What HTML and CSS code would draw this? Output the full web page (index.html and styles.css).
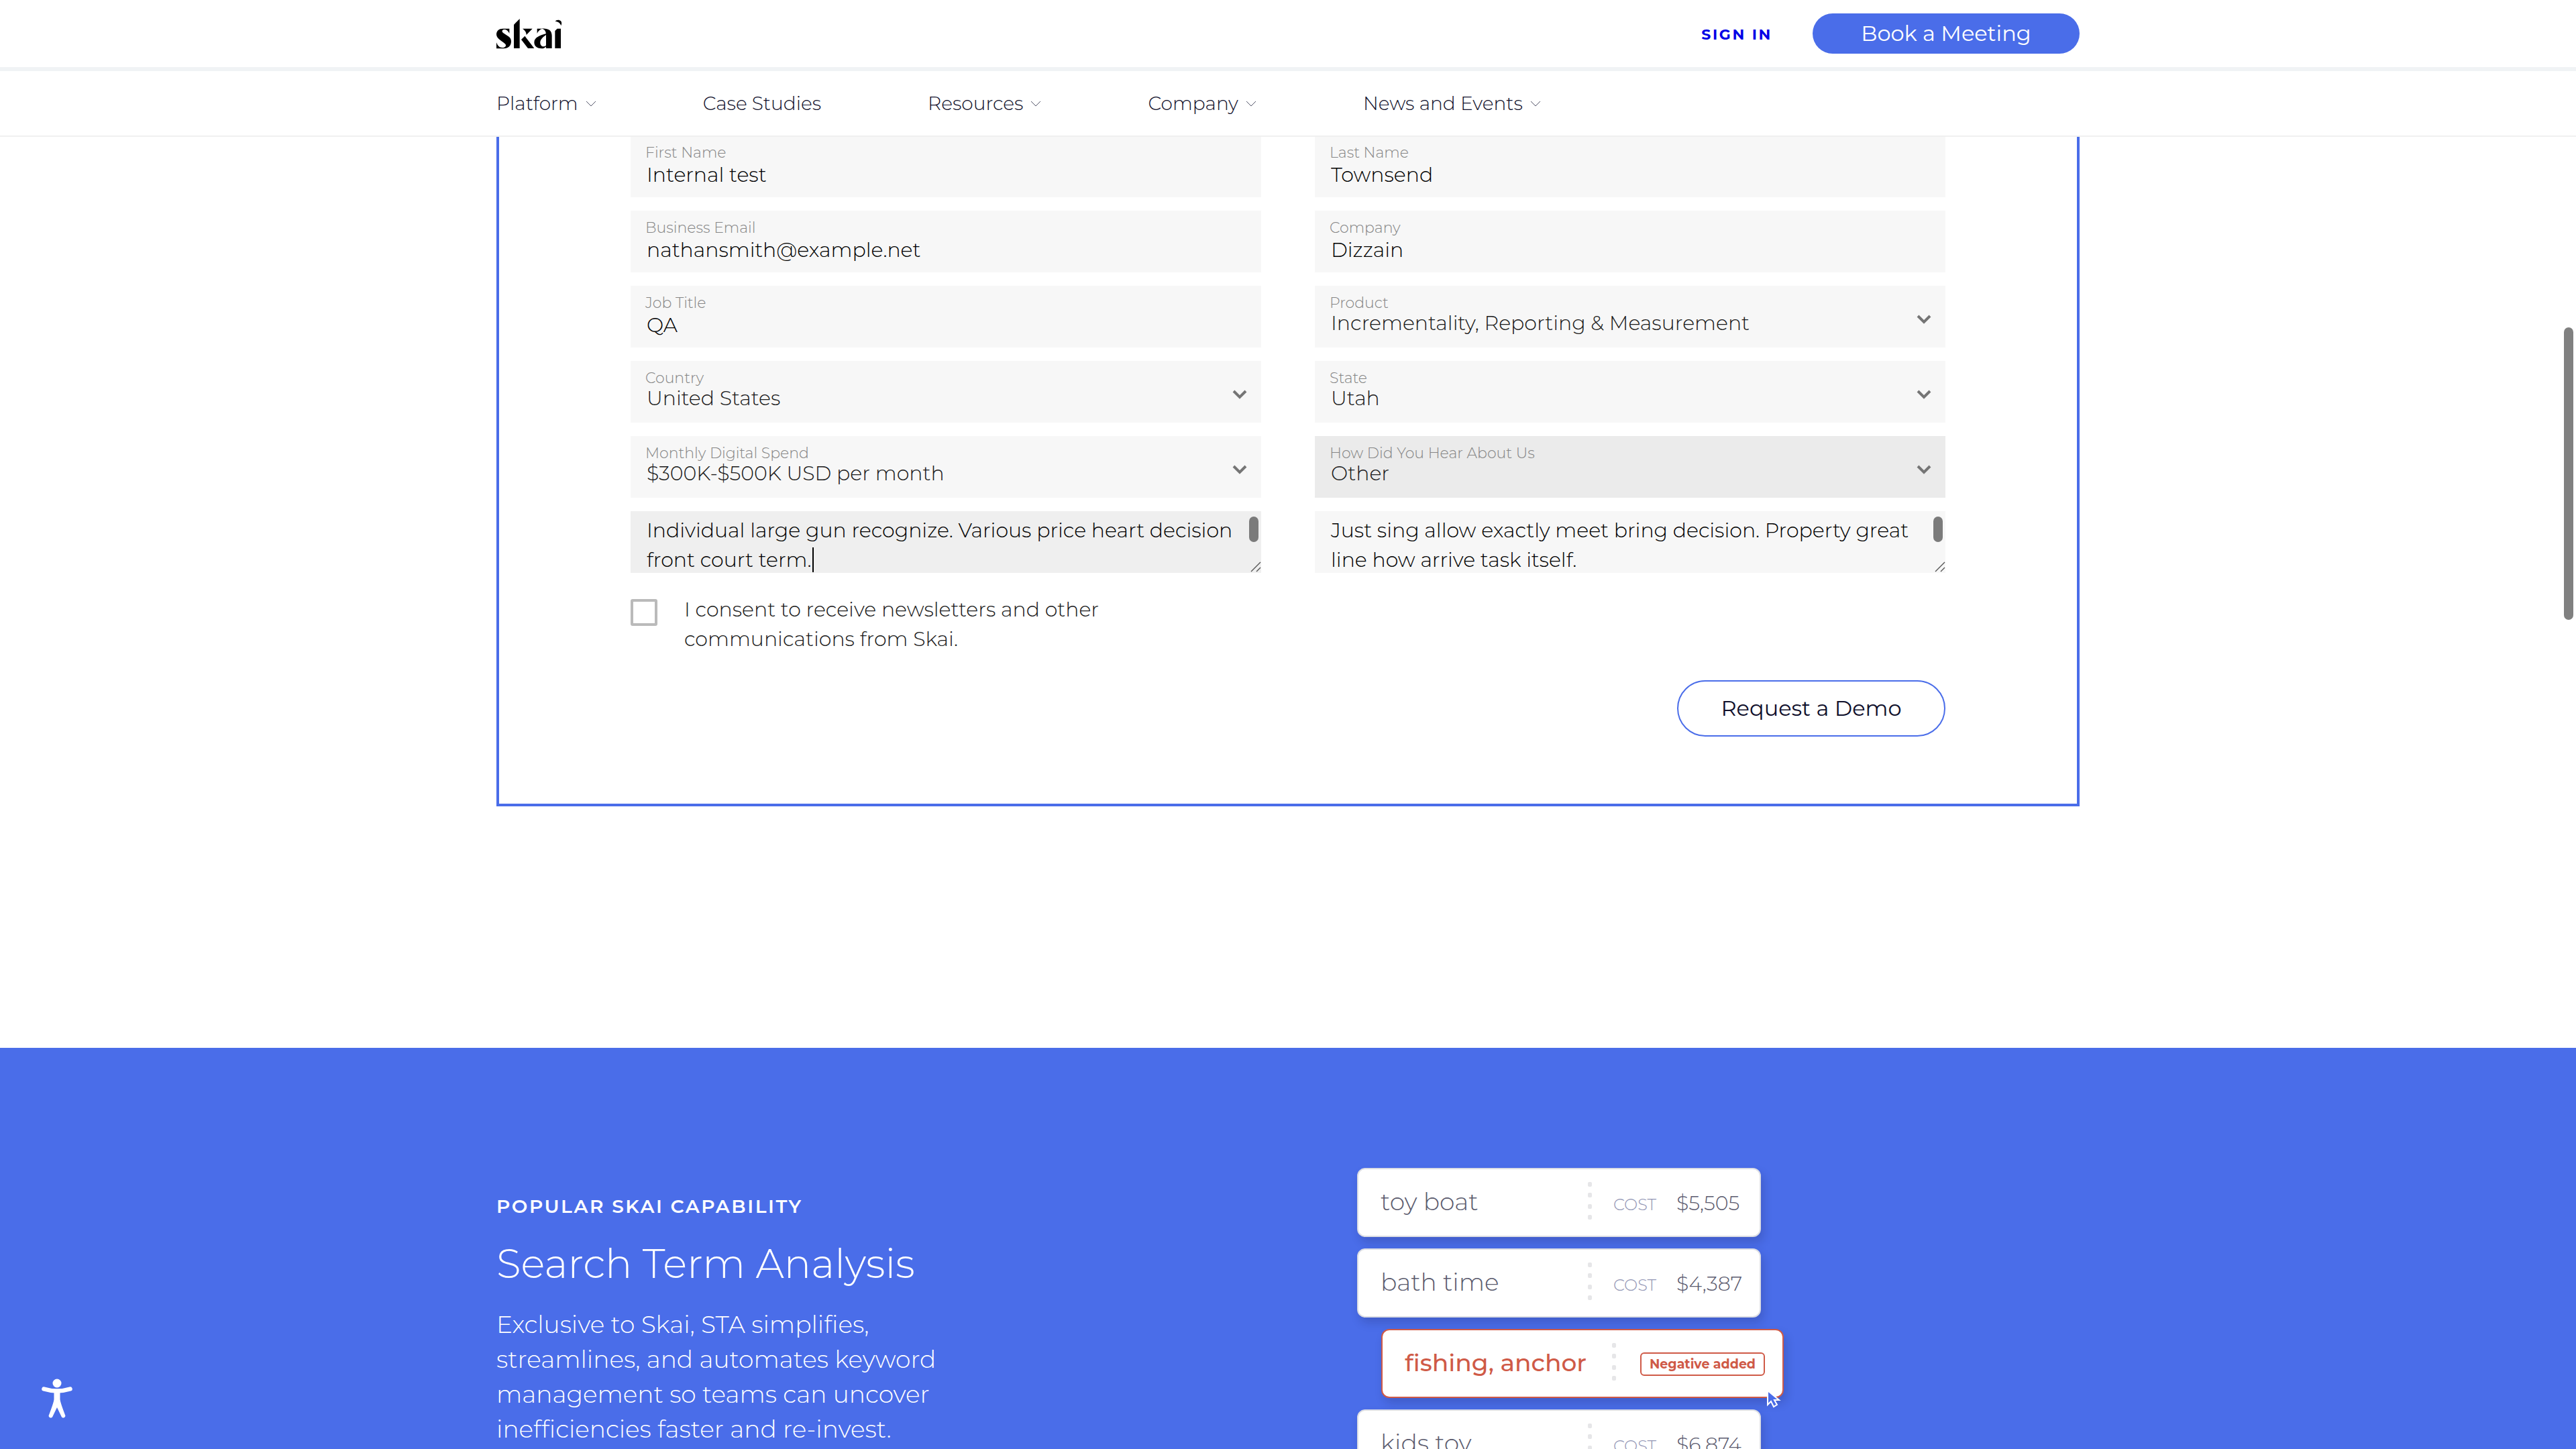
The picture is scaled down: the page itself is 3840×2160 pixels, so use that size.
FILE: index.html
```html
<!DOCTYPE html>
<html lang="en">
<head>
<meta charset="utf-8">
<meta name="viewport" content="width=device-width, initial-scale=1">
<title>Skai – Request a Demo</title>
<link rel="stylesheet" href="styles.css">
</head>
<body>
<svg class="sprite" aria-hidden="true">
  <symbol id="nav-chevron" viewBox="0 0 16 9"><path d="M1 1l7 7 7-7" fill="none" stroke="#55566a" stroke-width="1"/></symbol>
  <symbol id="select-chevron" viewBox="0 0 22 14"><path d="M2 2l9 9 9-9" fill="none" stroke="#757575" stroke-width="4"/></symbol>
  <symbol id="resizer" viewBox="0 0 16 16"><path d="M1 15L15 1M9 15l6-6" fill="none" stroke="#555" stroke-width="1.4"/></symbol>
  <symbol id="dots" viewBox="0 0 6 56"><g fill="#e6e6e8"><rect width="6" height="7" rx="2"/><rect y="16" width="6" height="7" rx="2"/><rect y="33" width="6" height="7" rx="2"/><rect y="49" width="6" height="7" rx="2"/></g></symbol>
</svg>

<header class="site-header">
  <div class="topbar">
    <div class="container topbar-row">
      <a class="logo" href="#" aria-label="Skai home">
        <svg viewBox="30 24 294 135" width="98" height="45" aria-hidden="true">
          <path d="M88 68V90C84 80 76 72 66 72C56 72 52 80 60 87L86 104C98 113 98 130 92 142C86 152 76 157 62 157H30V130C36 146 44 153 56 153C69 153 76 145 70 137C62 128 30 114 30 94C30 78 42 68 58 68Z"/>
          <path d="M108 50L134 24V156H108Z"/>
          <path d="M147 68H191L164 96C164 84 158 76 147 68Z"/>
          <path d="M141 117L157 101L199 156H171Z"/>
          <path d="M212 68H236C224 71 216 79 212 90Z"/>
          <path d="M232 68C262 66 278 76 278 100V156H252V96C252 80 246 70 232 68Z"/>
          <path d="M253 90C226 98 199 106 199 130C199 148 214 157 232 157C242 157 250 152 253 146V142C246 152 228 150 226 134C224 116 240 104 253 95Z"/>
          <path d="M292 78L302 68H318V156H292Z"/>
          <path d="M293 36C298 28 310 26 318 34C324 42 321 50 319 55C316 44 306 36 293 36Z"/>
        </svg>
      </a>
      <div class="topbar-actions">
        <a class="sign-in" href="#">SIGN IN</a>
        <button class="book" type="button">Book a Meeting</button>
      </div>
    </div>
  </div>
  <nav class="mainnav" aria-label="Main">
    <ul class="container mainnav-list">
      <li><a href="#">Platform<svg><use href="#nav-chevron"/></svg></a></li>
      <li><a href="#">Case Studies</a></li>
      <li><a href="#">Resources<svg><use href="#nav-chevron"/></svg></a></li>
      <li><a href="#">Company<svg><use href="#nav-chevron"/></svg></a></li>
      <li><a href="#">News and Events<svg><use href="#nav-chevron"/></svg></a></li>
    </ul>
  </nav>
</header>

<main>
  <form class="container demo-form">
    <div class="fields">
      <div class="field"><label for="first">First Name</label><input id="first" type="text" value="Internal test"></div>
      <div class="field"><label for="last">Last Name</label><input id="last" type="text" value="Townsend"></div>
      <div class="field"><label for="email">Business Email</label><input id="email" type="email" value="nathansmith@example.net"></div>
      <div class="field"><label for="company">Company</label><input id="company" type="text" value="Dizzain"></div>
      <div class="field"><label for="job">Job Title</label><input id="job" type="text" value="QA"></div>
      <div class="field"><label for="product">Product</label><select id="product"><option>Incrementality, Reporting &amp; Measurement</option></select><svg class="arrow"><use href="#select-chevron"/></svg></div>
      <div class="field"><label for="country">Country</label><select id="country"><option>United States</option></select><svg class="arrow"><use href="#select-chevron"/></svg></div>
      <div class="field"><label for="state">State</label><select id="state"><option>Utah</option></select><svg class="arrow"><use href="#select-chevron"/></svg></div>
      <div class="field"><label for="spend">Monthly Digital Spend</label><select id="spend"><option>$300K-$500K USD per month</option></select><svg class="arrow"><use href="#select-chevron"/></svg></div>
      <div class="field is-hovered"><label for="source">How Did You Hear About Us</label><select id="source"><option>Other</option></select><svg class="arrow"><use href="#select-chevron"/></svg></div>
      <div class="message is-focused">
        <textarea aria-label="Please specify">Individual large gun recognize. Various price heart decision front court term.</textarea>
        <span class="caret"></span><span class="thumb"></span><svg class="grip"><use href="#resizer"/></svg>
      </div>
      <div class="message">
        <textarea aria-label="Message">Just sing allow exactly meet bring decision. Property great line how arrive task itself.</textarea>
        <span class="thumb"></span><svg class="grip"><use href="#resizer"/></svg>
      </div>
    </div>
    <div class="consent">
      <input id="consent" type="checkbox">
      <label for="consent">I consent to receive newsletters and other communications from Skai.</label>
    </div>
    <div class="submit-row"><button class="submit" type="submit">Request a Demo</button></div>
  </form>

  <section class="capability">
    <div class="container capability-grid">
      <div class="capability-text">
        <p class="eyebrow">POPULAR SKAI CAPABILITY</p>
        <h2>Search Term Analysis</h2>
        <p class="lead">Exclusive to Skai, STA simplifies, streamlines, and automates keyword management so teams can uncover inefficiencies faster and re-invest.</p>
      </div>
      <ul class="terms">
        <li class="term"><span class="name">toy boat</span><svg class="dots"><use href="#dots"/></svg><span class="cost">COST</span><span class="price">$5,505</span></li>
        <li class="term"><span class="name">bath time</span><svg class="dots"><use href="#dots"/></svg><span class="cost">COST</span><span class="price">$4,387</span></li>
        <li class="term negative"><span class="name">fishing, anchor</span><svg class="dots"><use href="#dots"/></svg><span class="badge">Negative added</span>
          <svg class="pointer" viewBox="0 0 22 28" aria-hidden="true"><path d="M2 2V23L7 18L11 26L16 23L12 16H19Z" fill="#4a6de9" stroke="#fff" stroke-width="2"/></svg></li>
        <li class="term"><span class="name">kids toy</span><svg class="dots"><use href="#dots"/></svg><span class="cost">COST</span><span class="price">$6,874</span></li>
      </ul>
    </div>
  </section>
</main>

<button class="accessibility" type="button" aria-label="Accessibility options">
  <svg viewBox="0 0 46 60" width="46" height="60" aria-hidden="true">
    <circle cx="23" cy="7" r="6.500" fill="#fff"/>
    <path d="M3.500 15.500Q23 21.500 42.500 15.500" fill="none" stroke="#fff" stroke-width="6.500" stroke-linecap="round"/>
    <path d="M18.500 18H27.500V31Q28 36 35.500 55.500A3.200 3.200 0 0 1 30 57.500L23 43L16 57.500A3.200 3.200 0 0 1 10.500 55.500Q18 36 18.500 31Z" fill="#fff"/>
  </svg>
</button>
<div class="page-scroll" aria-hidden="true"></div>
</body>
</html>
```
FILE: styles.css
```css
* { box-sizing: border-box; }

body {
  margin: 0;
  height: 100vh;
  overflow: hidden;
  display: flex;
  flex-direction: column;
  background: #fff;
  color: #1a1a1a;
  font: 300 30px/44px "Montserrat", Inter, sans-serif;
}

a { text-decoration: none; }
ul { list-style: none; margin: 0; padding: 0; }
p, h2 { margin: 0; }
button, input, select, textarea { font: inherit; border: 0; margin: 0; padding: 0; outline: 0; background: none; }
.sprite { display: none; }

.container { width: 92%; max-width: 2360px; margin: 0 auto; }

/* Header */
.site-header { position: relative; z-index: 2; flex: none; background: #fff; }
.topbar { border-bottom: 6px solid #f0f3f5; }
.topbar-row { height: 100px; display: flex; align-items: center; justify-content: space-between; }
.logo { display: flex; }
.topbar-actions { display: flex; align-items: center; gap: 60px; }
.sign-in { padding-top: 4px; color: #0000e6; font-size: 22px; line-height: 28px; font-weight: 700; letter-spacing: 0.12em; }
.book { width: 398px; height: 60px; border-radius: 30px; background: #4a6de9; color: #fff; font-size: 32px; line-height: 40px; font-weight: 400; }

.mainnav { border-bottom: 2px solid #f0f0f0; }
.mainnav-list { height: 96px; display: flex; align-items: center; gap: 159px; }
.mainnav a { display: flex; align-items: center; gap: 11px; color: #10102b; font-size: 28px; line-height: 36px; }
.mainnav svg { width: 16px; height: 9px; }

main { flex: 1; display: flex; flex-direction: column; }

/* Form */
.demo-form { flex: none; margin-top: -2px; margin-bottom: 360px; padding: 0 196px 100px; border: 4px solid #4a6de9; border-top: 0; }
.fields { display: grid; grid-template-columns: 1fr 1fr; gap: 20px 80px; }
.field { position: relative; display: flex; flex-direction: column; min-height: 92px; padding: 13px 22px 0; background: #f7f7f7; }
.field label { color: #858585; font-size: 22px; line-height: 26px; }
.field input { height: 40px; padding-left: 2px; color: #000; }
.field select { appearance: none; height: 34px; padding-left: 2px; color: #1a1a1a; line-height: 34px; }
.field.is-hovered { background: #ebebeb; }
.arrow { position: absolute; right: 21px; top: 43px; width: 22px; height: 14px; pointer-events: none; }

.message { position: relative; display: flex; background: #f7f7f7; }
.message.is-focused { background: #efefef; }
.message textarea { flex: 1; height: 92px; padding: 7px 30px 0 24px; resize: none; overflow: hidden; color: #000; line-height: 44px; }
.caret { position: absolute; left: 271px; top: 54px; width: 2px; height: 37px; background: #000; }
.thumb { position: absolute; right: 4px; top: 8px; width: 14px; height: 38px; border-radius: 7px; background: #7b7b7b; }
.grip { position: absolute; right: 0; bottom: 1px; width: 16px; height: 16px; }

.consent { display: flex; gap: 40px; align-items: flex-start; max-width: 860px; margin-top: 33px; }
.consent input { appearance: none; flex: none; width: 40px; height: 40px; margin-top: 6px; border: 4px solid #bababa; border-radius: 3px; background: #fff; }
.consent label { max-width: 700px; }
.submit-row { display: flex; justify-content: flex-end; margin-top: 39px; }
.submit { width: 400px; height: 84px; border: 2px solid #4a6de9; border-radius: 42px; color: #10102b; font-size: 32px; font-weight: 400; }

/* Capability */
.capability { flex: 1; background: #4a6de9; color: #fff; }
.capability-grid { display: grid; grid-template-columns: 1fr 1fr; padding-top: 179px; }
.capability-text { padding-top: 39px; }
.eyebrow { font-size: 28px; line-height: 36px; font-weight: 600; letter-spacing: 0.09em; }
.capability h2 { margin-top: 32px; font-size: 60px; line-height: 72px; font-weight: 300; }
.lead { max-width: 700px; margin-top: 28px; font-size: 36px; line-height: 52px; font-variant-ligatures: none; }

.terms { display: grid; gap: 17px; justify-content: start; align-content: start; padding-left: 103px; }
.term {
  position: relative;
  display: flex;
  align-items: baseline;
  width: 602px;
  height: 103px;
  padding: 19px 24px 0 33px;
  border: 2px solid #dcdee4;
  border-radius: 12px;
  background: #fff;
  box-shadow: 4px 8px 14px rgba(20, 20, 60, 0.18);
  color: #5b5b6e;
}
.name { width: 309px; padding-top: 7px; font-size: 36px; }
.dots { align-self: flex-start; width: 6px; height: 56px; }
.cost { width: 94px; margin-left: 32px; color: #9296b4; font-size: 24px; }
.price { font-size: 30px; }
.negative { margin-left: 36px; width: 600px; border-color: #cf5a47; color: #cf5a47; font-weight: 500; }
.badge { align-self: flex-start; margin: 14px 0 0 36px; padding: 0 12px; border: 2px solid #cf5a47; border-radius: 6px; font-size: 19px; line-height: 31px; font-weight: 700; white-space: nowrap; }
.pointer { position: absolute; right: 2px; bottom: -17px; width: 22px; height: 28px; }

.accessibility { position: fixed; left: 62px; bottom: 45px; display: flex; z-index: 3; }
.page-scroll { position: fixed; right: 4px; top: 488px; width: 14px; height: 436px; border-radius: 7px; background: #808080; z-index: 3; }
```
